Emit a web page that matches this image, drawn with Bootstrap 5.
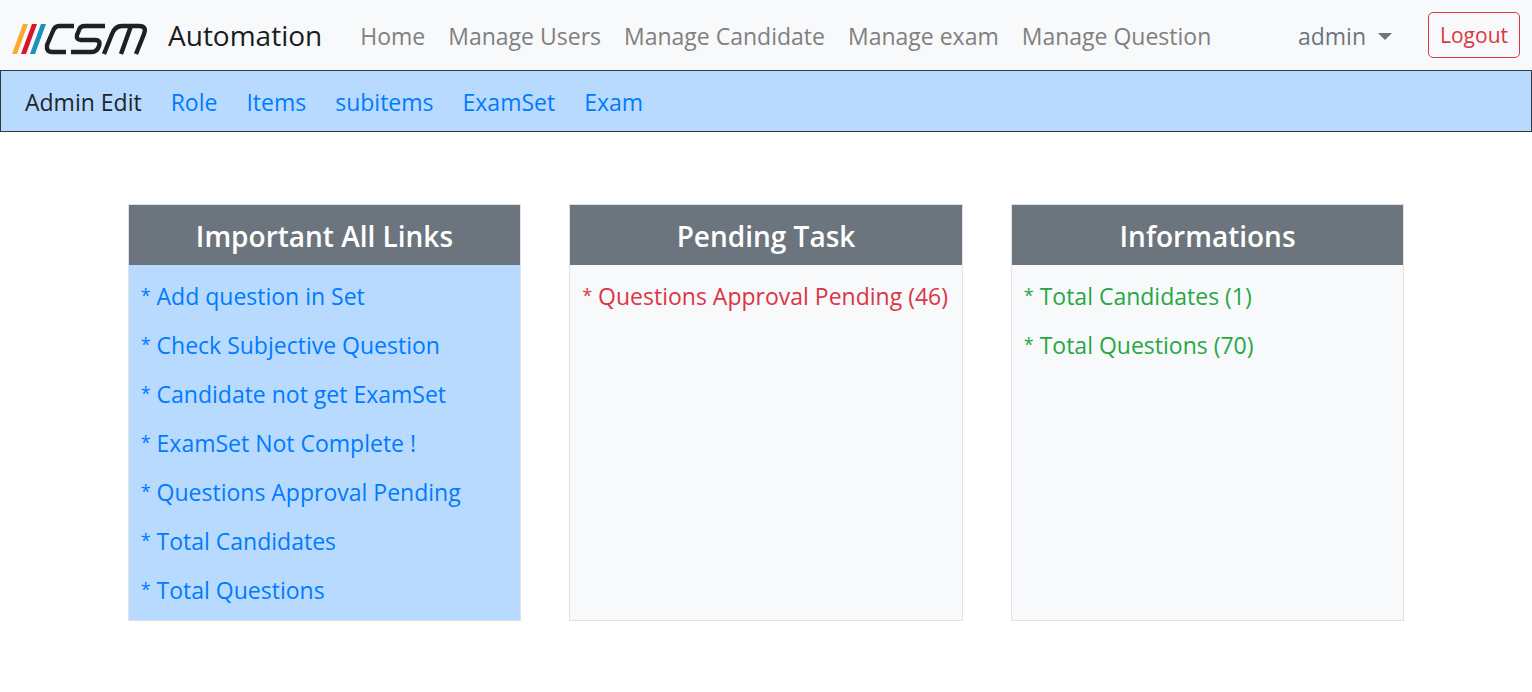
<!DOCTYPE html>
<html lang="en">
<head>
<meta charset="utf-8">
<meta name="viewport" content="width=device-width, initial-scale=1">
<title>CSM Automation</title>
<link href="https://cdn.jsdelivr.net/npm/bootstrap@5.3.0/dist/css/bootstrap.min.css" rel="stylesheet">
<style>
body { font-family: "Segoe UI", "Open Sans", "Noto Sans", sans-serif; font-size: 23px; line-height: 36px; color: #212529; background: #fff; }
a { text-decoration: none; }
.topbar { background: #f8f9fa; min-height: 70px; }
.topbar .navbar-brand { font-size: 28px; line-height: 44px; color: #1a1c1e; margin-right: 20px; }
.brand-name { margin-left: 20px; }
.main-links { gap: 23px; margin-left: 18px; }
.topbar .navbar-nav { --bs-navbar-nav-link-padding-x: 0; }
.topbar .nav-link { padding: 2px 0 0; color: #808080; }
.topbar .user-link { color: #6c757d; }
.user-link::after { margin-left: 12px; border-top-width: 7px; border-right-width: 7px; border-left-width: 7px; vertical-align: 5px; }
.user-menu { margin-right: 36px; }
.logout { --bs-btn-color: #dc3545; --bs-btn-border-color: #dc3545; --bs-btn-font-size: 21px; --bs-btn-padding-x: 11px; --bs-btn-padding-y: 6px; --bs-btn-border-radius: 5px; line-height: 32px; }
.subbar { background: #b8daff; border: 1px solid #343a40; min-height: 62px; gap: 29px; padding-top: 2px; }
.subbar a, .links a { color: #007bff; }
.subbar .subbar-title { color: #212529; }
.panels { padding-top: 72px; }
.panel { background: #f8f9fa; border: 1px solid #dee2e6; }
.panel h2 { background: #6c757d; color: #fff; font-size: 28px; line-height: 36px; font-weight: 600; padding: 13px 12px 11px; }
.panel ul { padding: 6px 12px; }
.panel li { padding: 7px 0 6px; white-space: nowrap; }
.star { font-size: 18px; line-height: 1; vertical-align: 3px; }
.links { background: #b8daff; }
.pending a { color: #dc3545; }
.informations a { color: #28a745; }
</style>
</head>
<body>
<nav class="navbar navbar-expand topbar py-0">
  <div class="container-fluid px-0">
    <a class="navbar-brand d-flex align-items-center py-0 ms-2" href="#">
      <svg class="mt-2" width="140" height="34" viewBox="0 0 140 34" role="img" aria-label="CSM">
        <path fill="#fca931" d="M15 2h5L9 32H4z"/><path fill="#d9152c" d="M24 2h5L18 32h-5z"/><path fill="#1692bd" d="M33 2h5L27 32h-5z"/>
        <g fill="none" stroke="#1e2122" stroke-width="4.4">
          <path d="M66 4H51q-4 0-6 5l-6 14q-1 7 5 7h14"/>
          <path d="M97 4H77q-5 0-6 4l-2 5q-1 5 4 5h14q6 0 4 6q-2 6-7 6H63"/>
          <path d="M96 32l8-20q3-8 10-8h17q8 0 5 8l-8 20M123 4L113 32"/>
        </g>
      </svg>
      <span class="brand-name">Automation</span>
    </a>
    <div class="navbar-nav main-links">
      <a class="nav-link" href="#">Home</a>
      <a class="nav-link" href="#">Manage Users</a>
      <a class="nav-link" href="#">Manage Candidate</a>
      <a class="nav-link" href="#">Manage exam</a>
      <a class="nav-link" href="#">Manage Question</a>
    </div>
    <div class="navbar-nav align-items-center ms-auto me-2 pe-1">
      <div class="nav-item dropdown user-menu"><a class="nav-link dropdown-toggle user-link" href="#" role="button" data-bs-toggle="dropdown" aria-expanded="false">admin</a></div>
      <button type="button" class="btn btn-outline-danger logout">Logout</button>
    </div>
  </div>
</nav>
<nav class="subbar d-flex align-items-center px-4" aria-label="Admin">
  <a class="subbar-title" href="#">Admin Edit</a>
  <a href="#">Role</a>
  <a href="#">Items</a>
  <a href="#">subitems</a>
  <a href="#">ExamSet</a>
  <a href="#">Exam</a>
</nav>
<main class="panels container-fluid px-0 overflow-hidden">
  <div class="col-10 mx-auto">
    <div class="row row-cols-3 gx-5">
      <div class="col"><section class="panel links h-100">
        <h2 class="text-center mb-0">Important All Links</h2>
        <ul class="list-unstyled mb-0">
          <li><a href="#"><span class="star">*</span> Add question in Set</a></li>
          <li><a href="#"><span class="star">*</span> Check Subjective Question</a></li>
          <li><a href="#"><span class="star">*</span> Candidate not get ExamSet</a></li>
          <li><a href="#"><span class="star">*</span> ExamSet Not Complete !</a></li>
          <li><a href="#"><span class="star">*</span> Questions Approval Pending</a></li>
          <li><a href="#"><span class="star">*</span> Total Candidates</a></li>
          <li><a href="#"><span class="star">*</span> Total Questions</a></li>
        </ul>
      </section></div>
      <div class="col"><section class="panel pending h-100">
        <h2 class="text-center mb-0">Pending Task</h2>
        <ul class="list-unstyled mb-0">
          <li><a href="#"><span class="star">*</span> Questions Approval Pending (46)</a></li>
        </ul>
      </section></div>
      <div class="col"><section class="panel informations h-100">
        <h2 class="text-center mb-0">Informations</h2>
        <ul class="list-unstyled mb-0">
          <li><a href="#"><span class="star">*</span> Total Candidates (1)</a></li>
          <li><a href="#"><span class="star">*</span> Total Questions (70)</a></li>
        </ul>
      </section></div>
    </div>
  </div>
</main>
<script src="https://cdn.jsdelivr.net/npm/bootstrap@5.3.0/dist/js/bootstrap.bundle.min.js"></script>
</body>
</html>
